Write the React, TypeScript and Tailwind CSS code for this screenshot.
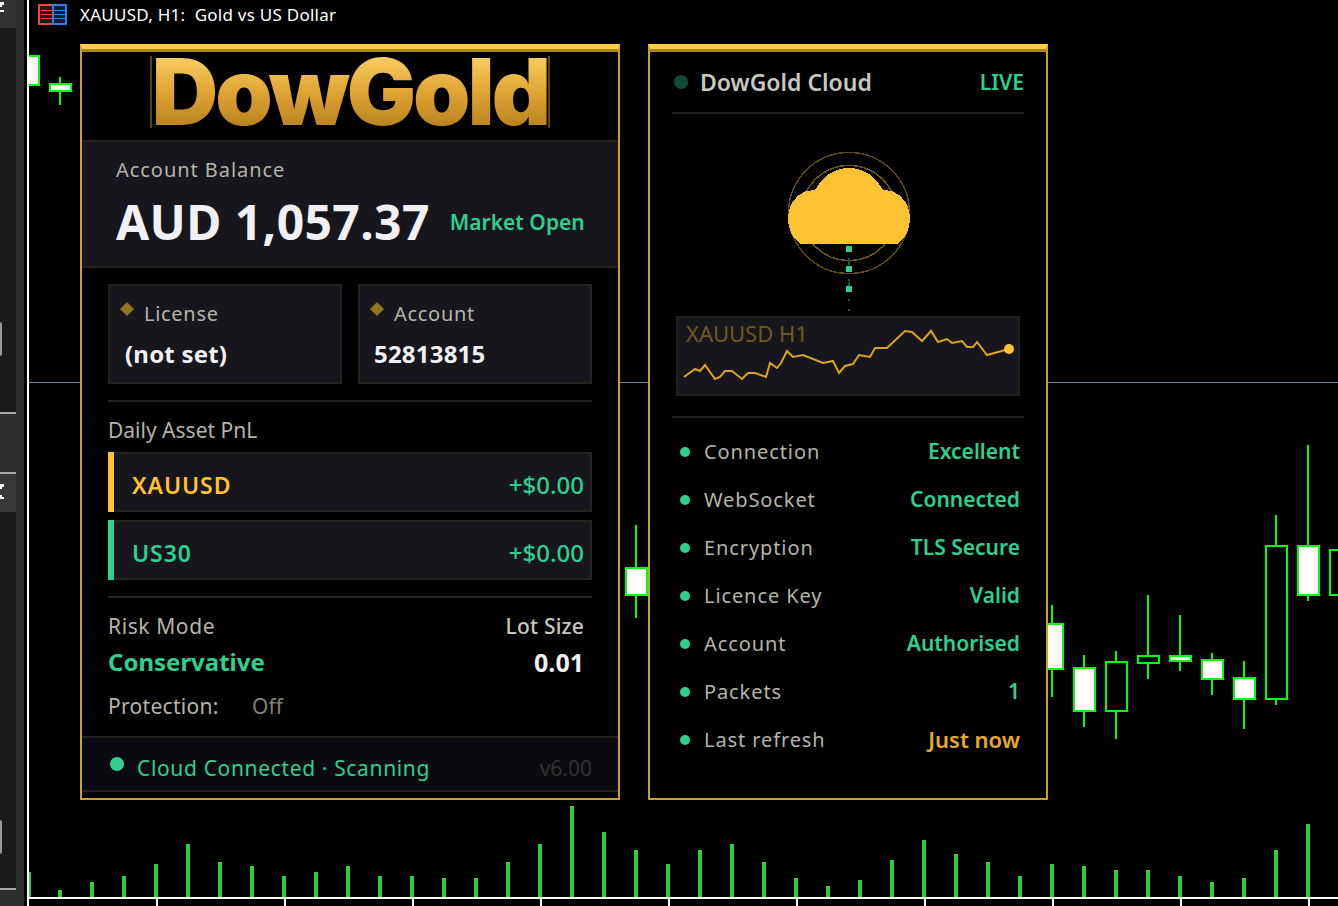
import { Fragment } from 'react'

// candles sit on a 32px grid, everything in page pixels
const candles = [
  { c: 28, hi: 55, lo: 86, top: 55, bot: 86, up: false },
  { c: 60, hi: 77, lo: 105, top: 83, bot: 92, up: false },
  { c: 636, hi: 525, lo: 618, top: 567, bot: 596, up: false },
  { c: 1052, hi: 605, lo: 697, top: 623, bot: 670, up: false },
  { c: 1084, hi: 655, lo: 727, top: 667, bot: 712, up: false },
  { c: 1116, hi: 651, lo: 739, top: 661, bot: 712, up: true },
  { c: 1148, hi: 595, lo: 679, top: 655, bot: 664, up: true },
  { c: 1180, hi: 615, lo: 671, top: 655, bot: 662, up: false },
  { c: 1212, hi: 653, lo: 695, top: 659, bot: 680, up: false },
  { c: 1244, hi: 661, lo: 729, top: 677, bot: 700, up: false },
  { c: 1276, hi: 515, lo: 705, top: 545, bot: 700, up: true },
  { c: 1308, hi: 445, lo: 601, top: 545, bot: 596, up: false },
  { c: 1340, hi: 549, lo: 596, top: 549, bot: 596, up: true },
]

const volumes = [
  890, 882, 876, 864, 844, 862, 866, 876, 872, 866, 876, 876, 878, 878, 862, 844, 806, 832, 850, 864,
  850, 844, 862, 878, 886, 880, 860, 840, 854, 862, 876, 864, 866, 870, 870, 876, 882, 878, 850, 824,
]

const sparkline =
  '684,377 695,369 700,371 705,365 715,379 720,377 725,371 732,371 742,379 748,373 755,373 766,377 770,363 777,368 781,363 787,351 793,357 803,355 823,363 833,361 839,373 845,366 853,364 859,355 870,357 875,348 887,348 905,331 912,332 922,341 931,331 938,342 947,339 952,343 962,341 967,347 973,347 977,342 987,355 1009,349'

const statusRows = [
  { label: 'Connection', value: 'Excellent' },
  { label: 'WebSocket', value: 'Connected' },
  { label: 'Encryption', value: 'TLS Secure' },
  { label: 'Licence Key', value: 'Valid' },
  { label: 'Account', value: 'Authorised' },
  { label: 'Packets', value: '1' },
  { label: 'Last refresh', value: 'Just now', gold: true },
]

function ChartCanvas() {
  return (
    <svg className="absolute inset-0" width="1338" height="906" shapeRendering="crispEdges">
      <rect x="29" y="382" width="1309" height="1" fill="#778899" />
      {candles.map((k) => (
        <Fragment key={k.c}>
          <rect x={k.c - 1} y={k.hi} width="2" height={k.lo - k.hi} fill="#00ff00" />
          <rect x={k.c - 11} y={k.top} width="23" height={k.bot - k.top} fill="#00ff00" />
          <rect
            x={k.c - 9}
            y={k.top + 2}
            width="19"
            height={k.bot - k.top - 4}
            fill={k.up ? '#000000' : '#ffffff'}
          />
        </Fragment>
      ))}
      {/* the first candle is cut by the chart edge */}
      <rect x="0" y="0" width="27" height="906" fill="#000000" />
      <rect x="27" y="0" width="2" height="906" fill="#ffffff" />
      <rect x="29" y="872" width="2" height="25" fill="#32cd32" />
      {volumes.map((top, i) => (
        <rect key={i} x={58 + i * 32} y={top} width="4" height={897 - top} fill="#32cd32" />
      ))}
      <rect x="29" y="897" width="1309" height="2" fill="#ffffff" />
      {[156, 284, 412, 540, 668, 796, 924, 1052, 1180, 1308].map((x) => (
        <rect key={x} x={x} y="899" width="2" height="7" fill="#ffffff" />
      ))}
    </svg>
  )
}

function SideBar() {
  return (
    <div className="absolute left-0 top-0 flex h-[906px] w-[24px] flex-col bg-[#2e2e2e]">
      <div className="h-[28px] w-[16px] bg-[#333333]">
        <svg width="16" height="28" shapeRendering="crispEdges">
          <path d="M0 2h4v3h-2v2h-2zM0 10h4v2h-4z" fill="#ffffff" />
        </svg>
      </div>
      <div className="relative h-[384px] w-[16px] bg-[#1a1a1a]">
        <div className="absolute left-0 top-[294px] h-[34px] w-[2px] rounded-r-sm bg-[#999999]" />
      </div>
      <div className="h-[2px] w-[16px] bg-[#a8a8a8]" />
      <div className="h-[58px] w-[16px] bg-[#2e2e2e]" />
      <div className="h-[2px] w-[16px] bg-[#a8a8a8]" />
      <div className="h-[38px] w-[16px] bg-[#383838]">
        <svg width="16" height="38" shapeRendering="crispEdges">
          <path d="M0 10h4v3h-2v2h-2zM0 21h2v2h2v2h-4z" fill="#ffffff" />
        </svg>
      </div>
      <div className="relative h-[376px] w-[16px] bg-[#1a1a1a]">
        <div className="absolute left-0 top-[308px] h-[34px] w-[2px] rounded-r-sm bg-[#999999]" />
      </div>
      <div className="h-[2px] w-[16px] bg-[#a8a8a8]" />
    </div>
  )
}

function TitleBar() {
  return (
    <div className="absolute left-[38px] top-[4px] flex items-center gap-[13px]">
      <svg width="29" height="21" shapeRendering="crispEdges">
        <rect x="1" y="1" width="14" height="19" fill="#2a1414" stroke="#ee4444" strokeWidth="2" />
        <rect x="15" y="1" width="13" height="19" fill="#0f1f33" stroke="#2f7df0" strokeWidth="2" />
        <path d="M3 6h11M3 10h11M3 14h11" stroke="#ee4444" strokeWidth="1" />
        <path d="M16 6h11M16 10h11M16 14h11" stroke="#2f7df0" strokeWidth="1" />
      </svg>
      <span className="whitespace-pre text-[17px] leading-[21px] tracking-[0.25px] text-white">XAUUSD, H1:  Gold vs US Dollar</span>
    </div>
  )
}

function InfoCard({ label, value, valueClass }: { label: string; value: string; valueClass: string }) {
  return (
    <div className="relative h-[100px] w-[234px] border-2 border-[#23231f] bg-[#16161c]">
      <span className="absolute left-[12px] top-[18px] size-[10px] rotate-45 bg-[#917420]" />
      <div className="absolute left-[34px] top-[13px] text-[20px] leading-[30px] tracking-[0.7px] text-[#b4b4aa]">
        {label}
      </div>
      <div className={`absolute top-[52px] text-[24px] font-bold leading-[32px] tracking-[0.2px] text-[#f0f0f5] ${valueClass}`}>
        {value}
      </div>
    </div>
  )
}

function PnlRow({ symbol, accent, text }: { symbol: string; accent: string; text: string }) {
  return (
    <div className="flex h-[60px] items-center border-2 border-l-0 border-[#23231f] bg-[#16161c]">
      <div className={`-my-[2px] h-[60px] w-[6px] ${accent}`} />
      <span className={`ml-[18px] pt-[7px] text-[23px] font-semibold tracking-[0.9px] ${text}`}>{symbol}</span>
      <span className="ml-auto pr-[6px] pt-[5px] text-[24px] font-medium text-[#2ed08f]">+$0.00</span>
    </div>
  )
}

function AccountPanel() {
  return (
    <div className="absolute left-[80px] top-[44px] h-[756px] w-[540px] border-x-2 border-b-2 border-t-[5px] border-x-[#c9a227] border-b-[#c9a227] border-t-[#ffcc44] bg-black">
      <div className="h-[3px] bg-[#a9851f]" />

      {/* Logo */}
      <div className="flex h-[88px] justify-center pt-[4px]">
        <div className="flex h-[72px] w-[400px] items-center justify-center border-x-2 border-[#5a4615]">
          <span className="bg-gradient-to-b from-[#ffdb6a] via-[#e0a434] to-[#ad7816] bg-clip-text font-['Inter',sans-serif] text-[92px] font-black leading-[92px] tracking-[-3px] text-transparent">
            DowGold
          </span>
        </div>
      </div>

      {/* Balance */}
      <div className="h-[128px] border-y-2 border-[#23231f] bg-[#16161c] pl-[34px]">
        <div className="mt-[13px] text-[20px] leading-[30px] tracking-[0.95px] text-[#b4b4aa]">Account Balance</div>
        <div className="mt-[9px] flex items-center">
          <span className="text-[48px] font-bold leading-[56px] tracking-[0.4px] text-[#f0f0f5]">AUD 1,057.37</span>
          <span className="ml-[20px] pt-[1px] text-[21px] font-semibold text-[#2ed08f]">Market Open</span>
        </div>
      </div>

      <div className="px-[26px]">
        <div className="mt-[16px] flex gap-[16px]">
          <InfoCard label="License" value="(not set)" valueClass="left-[15px]" />
          <InfoCard label="Account" value="52813815" valueClass="left-[14px]" />
        </div>

        <div className="mt-[16px] h-[2px] bg-[#23231f]" />
        <div className="mt-[14px] h-[28px] text-[21px] leading-[28px] text-[#b4b4aa]">Daily Asset PnL</div>

        <div className="mt-[8px] flex flex-col gap-[8px]">
          <PnlRow symbol="XAUUSD" accent="bg-[#ffc233]" text="text-[#ffc233]" />
          <PnlRow symbol="US30" accent="bg-[#2ed08f]" text="text-[#2ed08f]" />
        </div>

        <div className="mt-[16px] h-[2px] bg-[#23231f]" />

        <div className="mt-[14px] flex h-[28px] justify-between pr-[8px] text-[21px] leading-[28px]">
          <span className="tracking-[0.6px] text-[#b4b4aa]">Risk Mode</span>
          <span className="font-medium tracking-[0.2px] text-[#c8c8c0]">Lot Size</span>
        </div>
        <div className="mt-[5px] flex h-[34px] items-center justify-between pr-[8px] font-bold leading-[34px]">
          <span className="text-[24px] text-[#2ed08f]">Conservative</span>
          <span className="text-[25px] text-[#f0f0f5]">0.01</span>
        </div>
        <div className="mt-[13px] flex h-[28px] text-[21px] leading-[28px]">
          <span className="w-[144px] tracking-[0.3px] text-[#b4b4aa]">Protection:</span>
          <span className="text-[#808078]">Off</span>
        </div>
      </div>

      {/* Footer */}
      <div className="mt-[16px] flex h-[56px] items-center border-y-2 border-[#23231f] bg-[#0a0a10] pl-[28px] pr-[26px]">
        <span className="size-[14px] rounded-full bg-[#2ed08f]" />
        <span className="ml-[13px] pt-[9px] text-[21px] tracking-[0.65px] text-[#2ed08f]">Cloud Connected · Scanning</span>
        <span className="ml-auto pt-[9px] text-[21px] text-[#33332f]">v6.00</span>
      </div>
    </div>
  )
}

function CloudGraphic() {
  return (
    <div className="flex h-[202px] justify-center pt-[32px]">
      <svg className="ml-[2px]" width="130" height="170" fill="none">
        <g shapeRendering="crispEdges">
          <circle cx="65" cy="67" r="60.5" stroke="#5c4a18" strokeWidth="1.5" />
          <circle cx="65" cy="67" r="47.5" stroke="#6b5518" strokeWidth="1.5" />
          <path
            d="M17 98C8 92 4 84 4 72C4 60 10 50 22 45L31 44C37 33 48 22 65 22C82 22 93 33 99 44L108 45C120 50 126 60 126 72C126 84 122 92 113 98Z"
            fill="#ffc233"
          />
          <rect x="62" y="100" width="6" height="6" fill="#2ed08f" />
          <rect x="64" y="112" width="2" height="7" fill="#14573f" />
          <rect x="62" y="120" width="6" height="6" fill="#2ed08f" />
          <rect x="64" y="133" width="2" height="2" fill="#444444" />
          <rect x="64" y="136" width="2" height="4" fill="#14573f" />
          <rect x="62" y="140" width="6" height="6" fill="#2ed08f" />
          <rect x="64" y="153" width="2" height="2" fill="#444444" />
          <rect x="64" y="163" width="2" height="2" fill="#444444" />
        </g>
      </svg>
    </div>
  )
}

function CloudPanel() {
  return (
    <div className="absolute left-[648px] top-[44px] h-[756px] w-[400px] border-x-2 border-b-2 border-t-[5px] border-x-[#c9a227] border-b-[#c9a227] border-t-[#ffcc44] bg-black">
      <div className="h-[3px] bg-[#a9851f]" />
      <div className="px-[22px]">
        <div className="flex h-[62px] items-center border-b-2 border-[#23231f] pl-[2px]">
          <span className="size-[14px] rounded-full bg-[#0f4d36]" />
          <span className="ml-[12px] pt-[1px] text-[23px] font-semibold text-[#c8c8c0]">DowGold Cloud</span>
          <span className="ml-auto pt-[1px] text-[21px] font-semibold text-[#2ed08f]">LIVE</span>
        </div>

        <CloudGraphic />

        <div className="relative mx-[4px] h-[80px] border-2 border-[#23231f] bg-[#16161c]">
          <span className="absolute left-[8px] top-0 text-[22px] leading-[30px] text-[#6f5a20]">XAUUSD H1</span>
          <svg className="absolute left-[-2px] top-[-2px]" width="344" height="80" viewBox="676 316 344 80" fill="none">
            <polyline points={sparkline} stroke="#d9a520" strokeWidth="2" />
            <circle cx="1009" cy="349" r="5" fill="#ffc233" />
          </svg>
        </div>

        <div className="mt-[20px] h-[2px] bg-[#23231f]" />

        <div className="mt-[10px] flex flex-col">
          {statusRows.map((row) => (
            <div key={row.label} className="flex h-[48px] items-center pl-[8px] pr-[4px] text-[20px]">
              <span className="size-[10px] rounded-full bg-[#2ed08f]" />
              <span className="ml-[14px] tracking-[0.9px] text-[#b4b4aa]">{row.label}</span>
              <span className={`ml-auto -mt-[1px] font-semibold ${row.gold ? 'text-[22px] text-[#e8ac26]' : 'text-[21px] text-[#2ed08f]'}`}>{row.value}</span>
            </div>
          ))}
        </div>
      </div>
    </div>
  )
}

export default function App() {
  return (
    <div className="relative h-[906px] w-[1338px] overflow-hidden bg-black font-['Noto_Sans','Open_Sans',sans-serif]">
      <ChartCanvas />
      <SideBar />
      <TitleBar />
      <AccountPanel />
      <CloudPanel />
    </div>
  )
}
